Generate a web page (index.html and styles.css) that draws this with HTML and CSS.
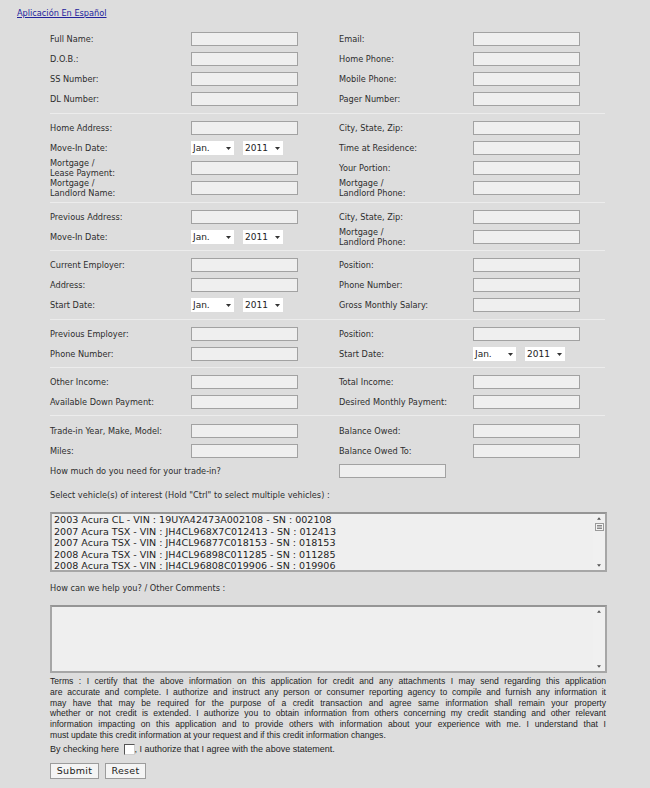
FILE: index.html
```html
<!DOCTYPE html>
<html lang="en">
<head>
<meta charset="utf-8">
<title>Credit Application</title>
<link rel="stylesheet" href="styles.css">
</head>
<body>
<div class="page">
  <a class="lang" href="#">Aplicación En Español</a>
  <form class="app">
    <div class="sec">
      <div class="lbl">Full Name:</div><input class="txt" type="text">
      <div class="lbl">Email:</div><input class="txt" type="text">
      <div class="lbl">D.O.B.:</div><input class="txt" type="text">
      <div class="lbl">Home Phone:</div><input class="txt" type="text">
      <div class="lbl">SS Number:</div><input class="txt" type="text">
      <div class="lbl">Mobile Phone:</div><input class="txt" type="text">
      <div class="lbl">DL Number:</div><input class="txt" type="text">
      <div class="lbl">Pager Number:</div><input class="txt" type="text">
    </div>
    <div class="sec">
      <div class="lbl">Home Address:</div><input class="txt" type="text">
      <div class="lbl">City, State, Zip:</div><input class="txt" type="text">
      <div class="lbl">Move-In Date:</div>
      <div class="dates"><div class="sel sel-m"><span>Jan.</span><svg class="arr" viewBox="0 0 5 3"><path d="M0 0H5L2.5 3Z"/></svg></div><div class="sel sel-y"><span>2011</span><svg class="arr" viewBox="0 0 5 3"><path d="M0 0H5L2.5 3Z"/></svg></div></div>
      <div class="lbl">Time at Residence:</div><input class="txt" type="text">
      <div class="lbl">Mortgage /<br>Lease Payment:</div><input class="txt" type="text">
      <div class="lbl">Your Portion:</div><input class="txt" type="text">
      <div class="lbl">Mortgage /<br>Landlord Name:</div><input class="txt" type="text">
      <div class="lbl">Mortgage /<br>Landlord Phone:</div><input class="txt" type="text">
    </div>
    <div class="sec two">
      <div class="lbl">Previous Address:</div><input class="txt" type="text">
      <div class="lbl">City, State, Zip:</div><input class="txt" type="text">
      <div class="lbl">Move-In Date:</div>
      <div class="dates"><div class="sel sel-m"><span>Jan.</span><svg class="arr" viewBox="0 0 5 3"><path d="M0 0H5L2.5 3Z"/></svg></div><div class="sel sel-y"><span>2011</span><svg class="arr" viewBox="0 0 5 3"><path d="M0 0H5L2.5 3Z"/></svg></div></div>
      <div class="lbl">Mortgage /<br>Landlord Phone:</div><input class="txt" type="text">
    </div>
    <div class="sec">
      <div class="lbl">Current Employer:</div><input class="txt" type="text">
      <div class="lbl">Position:</div><input class="txt" type="text">
      <div class="lbl">Address:</div><input class="txt" type="text">
      <div class="lbl">Phone Number:</div><input class="txt" type="text">
      <div class="lbl">Start Date:</div>
      <div class="dates"><div class="sel sel-m"><span>Jan.</span><svg class="arr" viewBox="0 0 5 3"><path d="M0 0H5L2.5 3Z"/></svg></div><div class="sel sel-y"><span>2011</span><svg class="arr" viewBox="0 0 5 3"><path d="M0 0H5L2.5 3Z"/></svg></div></div>
      <div class="lbl">Gross Monthly Salary:</div><input class="txt" type="text">
    </div>
    <div class="sec two">
      <div class="lbl">Previous Employer:</div><input class="txt" type="text">
      <div class="lbl">Position:</div><input class="txt" type="text">
      <div class="lbl">Phone Number:</div><input class="txt" type="text">
      <div class="lbl">Start Date:</div>
      <div class="dates"><div class="sel sel-m"><span>Jan.</span><svg class="arr" viewBox="0 0 5 3"><path d="M0 0H5L2.5 3Z"/></svg></div><div class="sel sel-y"><span>2011</span><svg class="arr" viewBox="0 0 5 3"><path d="M0 0H5L2.5 3Z"/></svg></div></div>
    </div>
    <div class="sec two">
      <div class="lbl">Other Income:</div><input class="txt" type="text">
      <div class="lbl">Total Income:</div><input class="txt" type="text">
      <div class="lbl">Available Down Payment:</div><input class="txt" type="text">
      <div class="lbl">Desired Monthly Payment:</div><input class="txt" type="text">
    </div>
    <div class="sec last">
      <div class="lbl">Trade-in Year, Make, Model:</div><input class="txt" type="text">
      <div class="lbl">Balance Owed:</div><input class="txt" type="text">
      <div class="lbl">Miles:</div><input class="txt" type="text">
      <div class="lbl">Balance Owed To:</div><input class="txt" type="text">
      <div class="lbl span2">How much do you need for your trade-in?</div><input class="txt" type="text">
    </div>

    <div class="caption cap-veh">Select vehicle(s) of interest (Hold "Ctrl" to select multiple vehicles) :</div>
    <div class="listbox">
      <div class="items">
        <div>2003 Acura CL - VIN : 19UYA42473A002108 - SN : 002108</div>
        <div>2007 Acura TSX - VIN : JH4CL968X7C012413 - SN : 012413</div>
        <div>2007 Acura TSX - VIN : JH4CL96877C018153 - SN : 018153</div>
        <div>2008 Acura TSX - VIN : JH4CL96898C011285 - SN : 011285</div>
        <div>2008 Acura TSX - VIN : JH4CL96808C019906 - SN : 019906</div>
      </div>
      <div class="sbar">
        <svg class="sarr" viewBox="0 0 5 3"><path d="M0 3H5L2.5 0Z"/></svg>
        <svg class="thumb" viewBox="0 0 9 8"><rect x="0.5" y="0.5" width="8" height="7" fill="#f4f4f4" stroke="#9a9a9a"/><path d="M2 2.5H7M2 4H7M2 5.5H7" stroke="#8a8a8a"/></svg>
        <div class="sfill"></div>
        <svg class="sarr" viewBox="0 0 5 3"><path d="M0 0H5L2.5 3Z"/></svg>
      </div>
    </div>

    <div class="caption cap-com">How can we help you? / Other Comments :</div>
    <div class="comments">
      <div class="area"></div>
      <div class="sbar">
        <svg class="sarr" viewBox="0 0 5 3"><path d="M0 3H5L2.5 0Z"/></svg>
        <div class="sfill"></div>
        <svg class="sarr" viewBox="0 0 5 3"><path d="M0 0H5L2.5 3Z"/></svg>
      </div>
    </div>

    <div class="terms">
      <span class="tl">Terms : I certify that the above information on this application for credit and any attachments I may send regarding this application</span>
      <span class="tl">are accurate and complete. I authorize and instruct any person or consumer reporting agency to compile and furnish any information it</span>
      <span class="tl">may have that may be required for the purpose of a credit transaction and agree same information shall remain your property</span>
      <span class="tl">whether or not credit is extended. I authorize you to obtain information from others concerning my credit standing and other relevant</span>
      <span class="tl">information impacting on this application and to provide others with information about your experience with me. I understand that I</span>
      <span class="tl end">must update this credit information at your request and if this credit information changes.</span>
    </div>

    <div class="agree">By checking here <span class="chk"></span>, I authorize that I agree with the above statement.</div>

    <div class="btns">
      <button type="button" class="btn btn-sub">Submit</button>
      <button type="button" class="btn btn-res">Reset</button>
    </div>
  </form>
</div>
</body>
</html>
```
FILE: styles.css
```css
html, body {
  margin: 0;
  padding: 0;
  background: #dddddd;
}
body {
  font-family: "DejaVu Sans", Verdana, sans-serif;
  color: #2d2d2d;
}
.page {
  padding: 8px 0 0 17px;
  height: 780px;
}
.lang {
  display: block;
  font-size: 8.2px;
  line-height: 10px;
  color: #23239c;
  text-decoration: underline;
  width: max-content;
}
.app {
  margin: 7px 0 0 33px;
  width: 557px;
}
.sec {
  display: grid;
  grid-template-columns: 141px 148px 134px 134px;
  grid-auto-rows: 20px;
  align-items: center;
  padding: 4px 0;
  width: 555px;
  border-bottom: 1px solid #ececec;
}
.sec.two {
  padding: 4px 0 3px;
}
.sec.last {
  border-bottom: none;
  padding-top: 5px;
}
.lbl {
  font-size: 8.2px;
  line-height: 10px;
  color: #2d2d2d;
  white-space: nowrap;
}
.span2 {
  grid-column: 1 / span 2;
}
.txt {
  display: block;
  box-sizing: border-box;
  width: 107px;
  height: 14px;
  margin: 0;
  padding: 0;
  border: 1px solid #a2a2a2;
  background: #efefef;
  outline: none;
}
.dates {
  display: flex;
  gap: 9px;
  height: 14px;
}
.sel {
  box-sizing: border-box;
  height: 14px;
  background: #ffffff;
  display: flex;
  align-items: center;
  justify-content: space-between;
  padding: 0 3px 0 2px;
  font-size: 9px;
  color: #222222;
}
.sel-m { width: 43px; }
.sel-y { width: 40px; }
.arr {
  width: 5px;
  height: 3px;
  fill: #333333;
}
.caption {
  font-size: 8.2px;
  line-height: 10px;
  color: #2d2d2d;
}
.cap-veh { margin-top: 5px; }
.listbox {
  margin-top: 12px;
  box-sizing: border-box;
  height: 60px;
  width: 557px;
  border: 2px solid #a6a6a6;
  border-top-color: #959595;
  background: #efefef;
  display: flex;
}
.items {
  flex: 1;
  padding: 0 0 0 2px;
  font-size: 9.55px;
  line-height: 11.5px;
  color: #1e1e1e;
  white-space: nowrap;
  overflow: hidden;
}
.sbar {
  width: 12px;
  display: flex;
  flex-direction: column;
  align-items: center;
  padding: 3px 0 3px;
  box-sizing: border-box;
  background: #f0f0f0;
}
.sarr {
  width: 4px;
  height: 3px;
  fill: #555555;
  flex: none;
}
.thumb {
  width: 9px;
  height: 8px;
  margin-top: 3px;
  flex: none;
}
.sfill { flex: 1; }
.cap-com { margin-top: 11px; }
.comments {
  margin-top: 12px;
  box-sizing: border-box;
  height: 68px;
  width: 557px;
  border: 2px solid #a6a6a6;
  border-top-color: #959595;
  background: #efefef;
  display: flex;
}
.area { flex: 1; }
.terms {
  margin-top: 3px;
  width: 556px;
  font-family: "Liberation Sans", Arial, sans-serif;
  font-size: 8.6px;
  line-height: 10.8px;
  color: #1e1e1e;
}
.tl {
  display: block;
  text-align: justify;
  text-align-last: justify;
}
.tl.end {
  text-align-last: left;
}
.agree {
  margin-top: 2px;
  font-family: "Liberation Sans", Arial, sans-serif;
  font-size: 9px;
  line-height: 13px;
  color: #1e1e1e;
  display: flex;
  align-items: center;
  white-space: pre;
}
.chk {
  display: inline-block;
  box-sizing: border-box;
  width: 11px;
  height: 11px;
  margin: 0 0 0 2px;
  background: #ffffff;
  border-left: 1px solid #555555;
  border-top: 1px solid #555555;
  border-right: 1px solid #cfcfcf;
  border-bottom: 1px solid #cfcfcf;
}
.btns {
  margin-top: 7px;
  display: flex;
  gap: 6px;
}
.btn {
  box-sizing: border-box;
  height: 16px;
  margin: 0;
  padding: 0;
  border: 1px solid #9c9c9c;
  background: #f4f4f4;
  font-family: "DejaVu Sans", Verdana, sans-serif;
  font-size: 9.5px;
  letter-spacing: 0.3px;
  color: #222222;
  line-height: 14px;
}
.btn-sub { width: 49px; }
.btn-res { width: 41px; }
```
